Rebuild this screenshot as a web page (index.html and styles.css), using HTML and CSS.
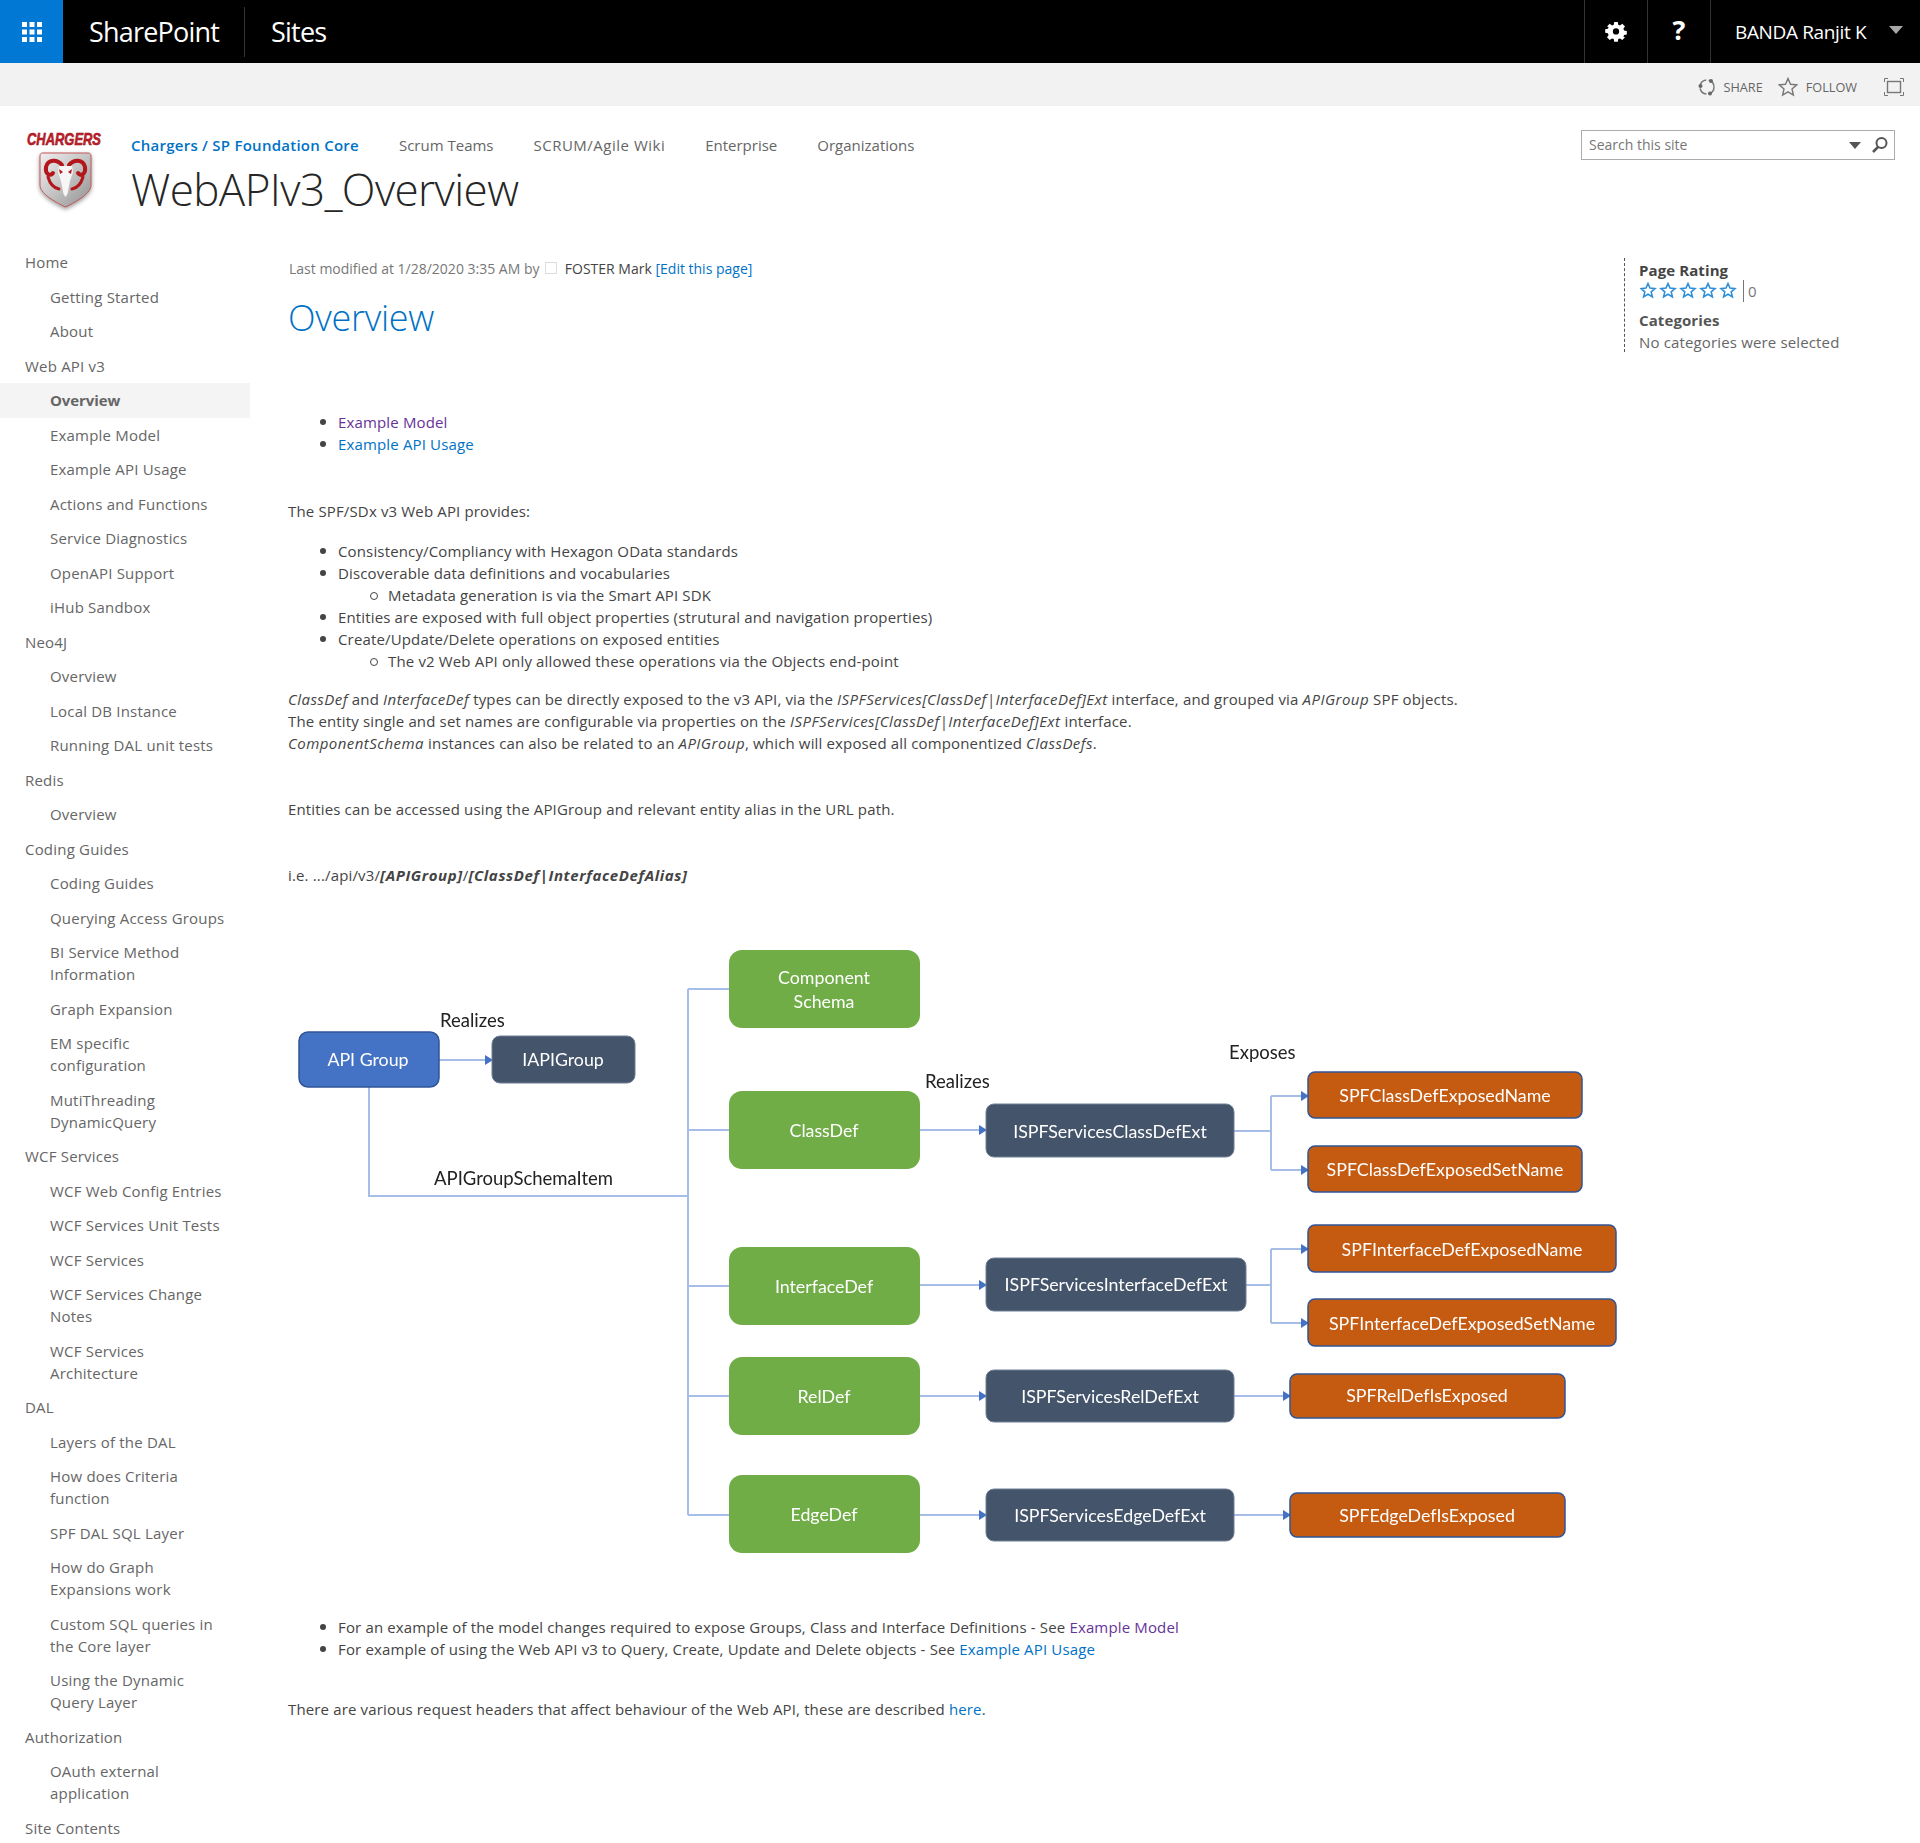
FILE: index.html
```html
<!DOCTYPE html>
<html lang="en">
<head>
    <meta charset="UTF-8">
    <title>WebAPIv3_Overview</title>
    <link rel="stylesheet" href="styles.css">
</head>
<body>
    <!-- SUITE BAR -->
    <header class="suite-bar">
        <a class="waffle" href="#">
            <svg width="20" height="20" viewBox="0 0 20 20" fill="#fff">
                <rect x="0" y="0" width="5" height="5"/><rect x="7.5" y="0" width="5" height="5"/><rect x="15" y="0" width="5" height="5"/>
                <rect x="0" y="7.5" width="5" height="5"/><rect x="7.5" y="7.5" width="5" height="5"/><rect x="15" y="7.5" width="5" height="5"/>
                <rect x="0" y="15" width="5" height="5"/><rect x="7.5" y="15" width="5" height="5"/><rect x="15" y="15" width="5" height="5"/>
            </svg>
        </a>
        <span class="suite-brand">SharePoint</span>
        <span class="suite-sites">Sites</span>
        <div class="suite-right">
            <span class="suite-btn">
                <svg width="22" height="22" viewBox="0 0 22 22"><path fill="#fff" fill-rule="evenodd" d="M9 1h4l.5 3 1.9.8L18 3l3 3-1.800 2.600.8 1.900 3 .5v4l-3 .5-.8 1.900L21 18l-3 3-2.600-1.800-1.900.8-.5 3H9l-.5-3-1.900-.8L4 21l-3-3 1.800-2.600-.8-1.900-3-.5v-4l3-.5.8-1.900L1 6l3-3 2.600 1.800 1.900-.8zM11 8a3.500 3.500 0 1 0 0 7 3.500 3.500 0 0 0 0-7z" transform="translate(1.100 .100) scale(.9)"/></svg>
            </span>
            <span class="suite-btn suite-help">?</span>
            <span class="suite-user">BANDA Ranjit K</span>
            <span class="suite-caret"></span>
        </div>
    </header>

    <!-- BARRA SHARE / FOLLOW -->
    <div class="action-bar">
        <svg width="18" height="18" viewBox="0 0 18 18"><circle cx="9" cy="9" r="7" fill="none" stroke="#777" stroke-width="1.500" stroke-dasharray="9 2.500"/><circle cx="13" cy="3" r="2" fill="#666"/><circle cx="2.500" cy="8" r="2" fill="#666"/><circle cx="12" cy="15.500" r="2" fill="#666"/></svg>
        <span class="action-label">SHARE</span>
        <svg class="action-star" width="20" height="20" viewBox="0 0 20 20"><path d="M10 1.500l2.500 5.800 6.200.6-4.700 4.100 1.400 6.100-5.400-3.200-5.400 3.200 1.400-6.100L1.300 7.900l6.200-.6z" fill="none" stroke="#777" stroke-width="1.400"/></svg>
        <span class="action-label">FOLLOW</span>
        <svg class="action-focus" width="20" height="18" viewBox="0 0 20 18"><path d="M.5 4V.5H4M16 .5h3.500V4M19.500 14v3.500H16M4 17.500H.5V14" fill="none" stroke="#777"/><rect x="3.500" y="3.500" width="13" height="11" fill="none" stroke="#777" stroke-width="1.400"/></svg>
    </div>

    <!-- CABECERA DEL SITIO -->
    <div class="site-header">
        <div class="site-logo">
            <svg width="105" height="86" viewBox="0 0 105 86">
                <defs>
                    <linearGradient id="silver" x1="0" y1="0" x2="1" y2="1">
                        <stop offset="0" stop-color="#efefef"/>
                        <stop offset=".5" stop-color="#c4c4c4"/>
                        <stop offset="1" stop-color="#8f8f8f"/>
                    </linearGradient>
                </defs>
                <text class="logo-text" x="1" y="15" textLength="74" lengthAdjust="spacingAndGlyphs">CHARGERS</text>
                <path class="logo-shield" d="M17 23h45c2 0 3 1 3 3v29c0 8-13 16-25.500 22C27 71 14 63 14 55V26c0-2 1-3 3-3z" fill="url(#silver)" stroke="#c9575a" stroke-width="1"/>
                <g fill="none" stroke="#b3161b" stroke-linecap="round">
                    <path d="M36 35c-5-6-14-6-16 2-1 7 4 10 7 6" stroke-width="4"/>
                    <path d="M43 35c5-6 14-6 16 2 1 7-4 10-7 6" stroke-width="4"/>
                    <path d="M22 47c2 7 6 11 11 12" stroke-width="3"/>
                    <path d="M57 47c-2 7-6 11-11 12" stroke-width="3"/>
                </g>
                <path d="M33 36h13l1 6-3 9-2.500 13-2 3-2-3L35 51l-3-9z" fill="#f6f6f6"/>
                <path d="M33 39l4 3-3 2zM46 39l-4 3 3 2z" fill="#b3161b"/>
            </svg>
        </div>
        <div class="site-titles">
            <nav class="top-nav">
                <a class="top-nav-home" href="#">Chargers / SP Foundation Core</a>
                <a href="#">Scrum Teams</a>
                <a class="top-nav-wiki" href="#">SCRUM/Agile Wiki</a>
                <a href="#">Enterprise</a>
                <a href="#">Organizations</a>
            </nav>
            <h1 class="site-title">WebAPIv3_Overview</h1>
        </div>
        <div class="search-box">
            <span class="search-text">Search this site</span>
            <span class="search-caret"></span>
            <svg width="18" height="18" viewBox="0 0 18 18"><circle cx="10.500" cy="7" r="5" fill="none" stroke="#555" stroke-width="2"/><path d="M7 11l-5 5" stroke="#555" stroke-width="2.500"/></svg>
        </div>
    </div>

    <div class="page">
        <!-- NAVEGACION LATERAL -->
        <nav class="side-nav">
            <a class="nav-top" href="#">Home</a>
            <a href="#">Getting Started</a>
            <a href="#">About</a>
            <a class="nav-top" href="#">Web API v3</a>
            <a class="nav-current" href="#">Overview</a>
            <a href="#">Example Model</a>
            <a href="#">Example API Usage</a>
            <a href="#">Actions and Functions</a>
            <a href="#">Service Diagnostics</a>
            <a href="#">OpenAPI Support</a>
            <a href="#">iHub Sandbox</a>
            <a class="nav-top" href="#">Neo4J</a>
            <a href="#">Overview</a>
            <a href="#">Local DB Instance</a>
            <a href="#">Running DAL unit tests</a>
            <a class="nav-top" href="#">Redis</a>
            <a href="#">Overview</a>
            <a class="nav-top" href="#">Coding Guides</a>
            <a href="#">Coding Guides</a>
            <a href="#">Querying Access Groups</a>
            <a href="#">BI Service Method<br>Information</a>
            <a href="#">Graph Expansion</a>
            <a href="#">EM specific<br>configuration</a>
            <a href="#">MutiThreading<br>DynamicQuery</a>
            <a class="nav-top" href="#">WCF Services</a>
            <a href="#">WCF Web Config Entries</a>
            <a href="#">WCF Services Unit Tests</a>
            <a href="#">WCF Services</a>
            <a href="#">WCF Services Change<br>Notes</a>
            <a href="#">WCF Services<br>Architecture</a>
            <a class="nav-top" href="#">DAL</a>
            <a href="#">Layers of the DAL</a>
            <a href="#">How does Criteria<br>function</a>
            <a href="#">SPF DAL SQL Layer</a>
            <a href="#">How do Graph<br>Expansions work</a>
            <a href="#">Custom SQL queries in<br>the Core layer</a>
            <a href="#">Using the Dynamic<br>Query Layer</a>
            <a class="nav-top" href="#">Authorization</a>
            <a href="#">OAuth external<br>application</a>
            <a class="nav-top" href="#">Site Contents</a>
        </nav>

        <!-- CONTENIDO -->
        <main class="content">
            <div class="modified">Last modified at 1/28/2020 3:35 AM by <span class="presence"></span> <span class="author">FOSTER Mark</span> <a href="#">[Edit this page]</a></div>
            <h2 class="page-heading">Overview</h2>

            <ul class="links-top">
                <li><a class="visited" href="#">Example Model</a></li>
                <li><a href="#">Example API Usage</a></li>
            </ul>

            <p class="intro">The SPF/SDx v3 Web API provides:</p>

            <ul class="features">
                <li>Consistency/Compliancy with Hexagon OData standards</li>
                <li>Discoverable data definitions and vocabularies
                    <ul><li>Metadata generation is via the Smart API SDK</li></ul>
                </li>
                <li>Entities are exposed with full object properties (strutural and navigation properties)</li>
                <li>Create/Update/Delete operations on exposed entities
                    <ul><li>The v2 Web API only allowed these operations via the Objects end-point</li></ul>
                </li>
            </ul>

            <p class="types">
                <em>ClassDef</em> and <em>InterfaceDef</em> types can be directly exposed to the v3 API, via the <em>ISPFServices[ClassDef|InterfaceDef]Ext</em> interface, and grouped via <em>APIGroup</em> SPF objects.<br>
                The entity single and set names are configurable via properties on the <em>ISPFServices[ClassDef|InterfaceDef]Ext</em> interface.<br>
                <em>ComponentSchema</em> instances can also be related to an <em>APIGroup</em>, which will exposed all componentized <em>ClassDefs</em>.
            </p>

            <p class="gap">Entities can be accessed using the APIGroup and relevant entity alias in the URL path.</p>

            <p class="gap">i.e. .../api/v3/<strong><em>[APIGroup]</em></strong>/<strong><em>[ClassDef|InterfaceDefAlias]</em></strong></p>

            <!-- DIAGRAMA: coordenadas de pagina -->
            <svg class="diagram" width="1340" height="640" viewBox="288 930 1340 640">
                <defs>
                    <marker id="arrow" markerWidth="8" markerHeight="10" refX="7" refY="5" orient="auto" markerUnits="userSpaceOnUse">
                        <path d="M0 0l8 5-8 5z" fill="#4472c4"/>
                    </marker>
                </defs>

                <g class="links">
                    <path d="M369 1087v109h319"/>
                    <path d="M688 989v526"/>
                    <path d="M688 989h41M688 1130h41M688 1286h41M688 1396h41M688 1515h41"/>
                    <path d="M1234 1131h37M1271 1096v74M1246 1285h25M1271 1249v74"/>
                    <path d="M439 1060h53" marker-end="url(#arrow)"/>
                    <path d="M920 1130h66" marker-end="url(#arrow)"/>
                    <path d="M920 1285h66" marker-end="url(#arrow)"/>
                    <path d="M920 1396h66" marker-end="url(#arrow)"/>
                    <path d="M920 1515h66" marker-end="url(#arrow)"/>
                    <path d="M1271 1096h37" marker-end="url(#arrow)"/>
                    <path d="M1271 1170h37" marker-end="url(#arrow)"/>
                    <path d="M1271 1249h37" marker-end="url(#arrow)"/>
                    <path d="M1271 1323h37" marker-end="url(#arrow)"/>
                    <path d="M1234 1396h56" marker-end="url(#arrow)"/>
                    <path d="M1234 1515h56" marker-end="url(#arrow)"/>
                </g>

                <rect class="box-blue" x="299" y="1032" width="140" height="55" rx="9"/>
                <text class="box-label" x="368" y="1066">API Group</text>
                <rect class="box-dark" x="492" y="1036" width="143" height="47" rx="8"/>
                <text class="box-label" x="563" y="1066">IAPIGroup</text>

                <rect class="box-green" x="729" y="950" width="191" height="78" rx="13"/>
                <text class="box-label" x="824" y="984">Component</text>
                <text class="box-label" x="824" y="1008">Schema</text>
                <rect class="box-green" x="729" y="1091" width="191" height="78" rx="13"/>
                <text class="box-label" x="824" y="1137">ClassDef</text>
                <rect class="box-green" x="729" y="1247" width="191" height="78" rx="13"/>
                <text class="box-label" x="824" y="1293">InterfaceDef</text>
                <rect class="box-green" x="729" y="1357" width="191" height="78" rx="13"/>
                <text class="box-label" x="824" y="1403">RelDef</text>
                <rect class="box-green" x="729" y="1475" width="191" height="78" rx="13"/>
                <text class="box-label" x="824" y="1521">EdgeDef</text>

                <rect class="box-dark" x="986" y="1104" width="248" height="53" rx="8"/>
                <text class="box-label" x="1110" y="1138">ISPFServicesClassDefExt</text>
                <rect class="box-dark" x="986" y="1258" width="260" height="53" rx="8"/>
                <text class="box-label" x="1116" y="1291">ISPFServicesInterfaceDefExt</text>
                <rect class="box-dark" x="986" y="1370" width="248" height="52" rx="8"/>
                <text class="box-label" x="1110" y="1403">ISPFServicesRelDefExt</text>
                <rect class="box-dark" x="986" y="1489" width="248" height="52" rx="8"/>
                <text class="box-label" x="1110" y="1522">ISPFServicesEdgeDefExt</text>

                <rect class="box-orange" x="1308" y="1072" width="274" height="46" rx="7"/>
                <text class="box-label" x="1445" y="1102">SPFClassDefExposedName</text>
                <rect class="box-orange" x="1308" y="1146" width="274" height="46" rx="7"/>
                <text class="box-label" x="1445" y="1176">SPFClassDefExposedSetName</text>
                <rect class="box-orange" x="1308" y="1225" width="308" height="47" rx="7"/>
                <text class="box-label" x="1462" y="1256">SPFInterfaceDefExposedName</text>
                <rect class="box-orange" x="1308" y="1299" width="308" height="47" rx="7"/>
                <text class="box-label" x="1462" y="1330">SPFInterfaceDefExposedSetName</text>
                <rect class="box-orange" x="1290" y="1374" width="275" height="44" rx="7"/>
                <text class="box-label" x="1427" y="1402">SPFRelDefIsExposed</text>
                <rect class="box-orange" x="1290" y="1493" width="275" height="44" rx="7"/>
                <text class="box-label" x="1427" y="1522">SPFEdgeDefIsExposed</text>

                <text class="edge-label" x="440" y="1027">Realizes</text>
                <text class="edge-label" x="434" y="1185">APIGroupSchemaItem</text>
                <text class="edge-label" x="925" y="1088">Realizes</text>
                <text class="edge-label" x="1229" y="1059">Exposes</text>
            </svg>

            <ul class="links-bottom">
                <li>For an example of the model changes required to expose Groups, Class and Interface Definitions - See <a class="visited" href="#">Example Model</a></li>
                <li>For example of using the Web API v3 to Query, Create, Update and Delete objects - See <a href="#">Example API Usage</a></li>
            </ul>

            <p class="closing">There are various request headers that affect behaviour of the Web API, these are described <a href="#">here</a>.</p>
        </main>

        <!-- PANEL DERECHO -->
        <aside class="side-panel">
            <div class="panel-title">Page Rating</div>
            <div class="rating">
                <svg width="100" height="18" viewBox="0 0 100 18">
                    <g fill="none" stroke="#2e8fd8" stroke-width="1.600">
                        <path id="rate-star" d="M8 1.500l2 4.600 5 .5-3.800 3.300 1.200 5-4.400-2.600-4.400 2.600 1.200-5L1 6.600l5-.5z"/>
                        <use href="#rate-star" x="20"/><use href="#rate-star" x="40"/><use href="#rate-star" x="60"/><use href="#rate-star" x="80"/>
                    </g>
                </svg>
                <span class="rating-count">0</span>
            </div>
            <div class="panel-title panel-cats">Categories</div>
            <div class="panel-text">No categories were selected</div>
        </aside>
    </div>
</body>
</html>
```

FILE: styles.css
```css
* { margin: 0; padding: 0; box-sizing: border-box; }
body {
    font-family: "Open Sans", "Noto Sans", sans-serif;
    font-size: 14px;
    line-height: 22px;
    color: #444;
    background: #fff;
}
a { color: #0072c6; text-decoration: none; }
a.visited { color: #663399; }

/* suite bar */
.suite-bar { display: flex; align-items: center; height: 63px; background: #000; color: #fff; }
.waffle { display: flex; align-items: center; justify-content: center; width: 63px; height: 63px; background: #0078d4; }
.suite-brand { font-size: 27px; line-height: 50px; padding: 0 25px 0 26px; border-right: 1px solid #333; letter-spacing: -0.8px; }
.suite-sites { font-size: 27px; padding-left: 26px; letter-spacing: -0.8px; }
.suite-right { display: flex; align-items: center; margin-left: auto; height: 63px; }
.suite-btn { display: flex; align-items: center; justify-content: center; width: 63px; height: 63px; border-left: 1px solid #333; font-size: 27px; font-weight: 700; }
.suite-help { padding-bottom: 3px; }
.suite-user { display: flex; align-items: center; height: 63px; border-left: 1px solid #333; padding-left: 24px; font-size: 19px; width: 210px; letter-spacing: -0.35px; }
.suite-caret { position: absolute; right: 17px; top: 26px; border: 7px solid transparent; border-top: 8px solid #a6a6a6; border-bottom: 0; }

/* share / follow */
.action-bar { display: flex; align-items: center; justify-content: flex-end; height: 43px; background: #f2f2f2; padding: 5px 16px 0 0; color: #666; }
.action-label { font-size: 12.700px; margin-left: 8px; }
.action-star { margin-left: 15px; }
.action-focus { margin-left: 27px; }

/* cabecera */
.site-header { display: flex; height: 139px; padding: 24px 25px 0 26px; }
.site-logo { width: 105px; }
.site-titles { flex: 1; }
.top-nav { display: flex; gap: 40px; height: 40px; font-size: 15px; line-height: 30px; }
.top-nav a { color: #666; }
.top-nav a.top-nav-home { color: #0072c6; font-weight: 600; letter-spacing: 0.25px; }
.top-nav a.top-nav-wiki { letter-spacing: 0.5px; }
.site-title { font-size: 44px; line-height: 56px; font-weight: 300; color: #262626; margin-top: -9px; letter-spacing: -0.6px; }
.search-box { display: flex; align-items: center; width: 314px; height: 30px; border: 1px solid #ababab; padding: 0 5px 0 7px; }
.search-text { flex: 1; color: #777; font-size: 14px; }
.search-caret { border: 6px solid transparent; border-top: 7px solid #555; border-bottom: 0; margin-right: 10px; }

/* layout */
.page { display: flex; }

/* navegacion lateral */
.side-nav { width: 250px; flex: none; font-size: 15px; color: #666; letter-spacing: 0.2px; }
.side-nav a { display: block; padding: 6.250px 0 6.250px 50px; color: #666; }
.side-nav a.nav-top { padding-left: 25px; }
.side-nav a.nav-current { background: #f4f4f4; font-weight: 700; letter-spacing: -0.1px; }

/* contenido */
.content { flex: none; width: 1375px; padding: 12px 0 0 38px; font-size: 15px; letter-spacing: 0.15px; }
.content em { letter-spacing: 0.45px; }
.content strong em { letter-spacing: 0.6px; }
.modified { font-size: 14px; color: #777; padding: 1px 0 0 1px; margin-bottom: -1px; letter-spacing: 0; }
.modified .author { color: #444; }
.presence { display: inline-block; width: 12px; height: 12px; border: 1px solid #ddd; margin: 0 4px 0 2px; }
.page-heading { font-size: 36px; line-height: 44px; font-weight: 300; color: #0072c6; margin-top: 17px; letter-spacing: -0.3px; }
ul { padding-left: 50px; list-style: none; }
li { position: relative; }
li::before { content: ""; position: absolute; left: -18px; top: 8px; width: 6px; height: 6px; border-radius: 50%; background: #444; }
ul ul li::before { background: none; border: 1px solid #444; }
.links-top { margin-top: 71px; }
.intro { margin-top: 45px; }
.features { margin-top: 18px; }
.types { margin-top: 16px; }
.gap { margin-top: 44px; }
.diagram { display: block; margin: 44px 0 0; filter: blur(.4px); }
.links-bottom { margin-top: 46px; }
.closing { margin-top: 38px; }

/* diagrama */
.links path { fill: none; stroke: #a6bde8; stroke-width: 2; }
.box-blue { fill: #4472c4; stroke: #2f5597; stroke-width: 1.500; }
.box-dark { fill: #44546a; stroke: #6f7f96; stroke-width: 1; }
.box-green { fill: #70ad47; }
.box-orange { fill: #c55a11; stroke: #2f5597; stroke-width: 1.500; }
.box-label { font-family: Lato, sans-serif; font-size: 17.800px; fill: #fff; text-anchor: middle; letter-spacing: 0; }
.edge-label { font-family: Lato, sans-serif; font-size: 18.500px; fill: #222; letter-spacing: 0; }

/* logo */
.logo-text { font-family: "Liberation Sans", sans-serif; font-size: 17px; font-weight: 700; font-style: italic; fill: #c8202a; stroke: #8e1218; stroke-width: .6; }
.logo-shield { filter: drop-shadow(0 2px 2px rgba(0, 0, 0, .4)); }

/* panel derecho */
.side-panel { flex: none; width: 295px; height: 94px; margin: 13px 0 0 -1px; border-left: 1px dashed #555; padding-left: 14px; font-size: 15px; letter-spacing: 0.15px; }
.panel-title { font-weight: 700; color: #444; line-height: 22px; margin-top: 1px; letter-spacing: 0.1px; }
.rating { display: flex; align-items: center; height: 22px; margin-top: -1px; padding-left: 1px; }
.rating-count { border-left: 1px solid #777; margin-left: 3px; padding-left: 4px; color: #777; }
.panel-cats { margin-top: 7px; color: #555; }
.panel-text { color: #666; }
```
